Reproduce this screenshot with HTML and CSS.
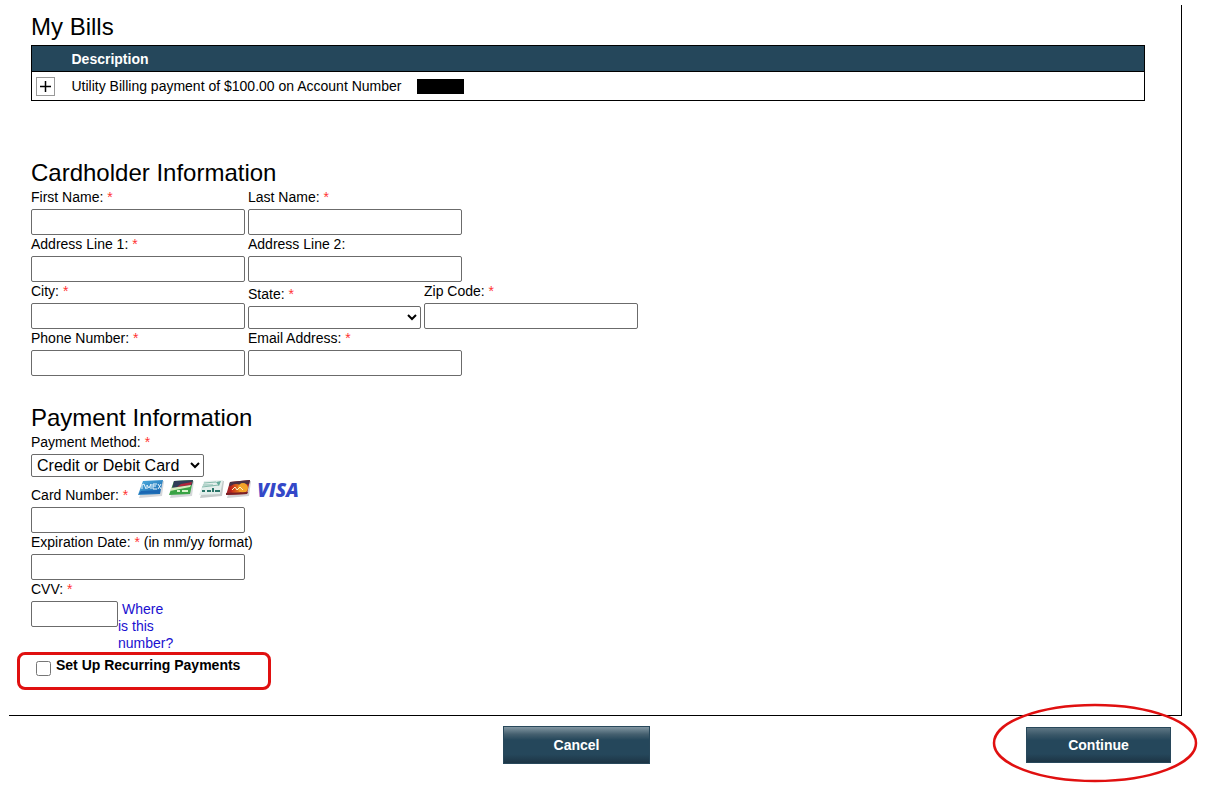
FILE: index.html
```html
<!DOCTYPE html>
<html lang="en">
<head>
<meta charset="utf-8">
<title>My Bills</title>
<link rel="stylesheet" href="styles.css">
</head>
<body>
<form class="page">
  <main class="panel">
    <section class="bills">
      <h2 class="title">My Bills</h2>
      <table class="bill-table">
        <thead>
          <tr><th class="toggle-cell"></th><th>Description</th></tr>
        </thead>
        <tbody>
          <tr>
            <td class="toggle-cell">
              <button class="toggle" type="button" aria-label="Expand">
                <svg width="17" height="17" viewBox="0 0 17 17"><path d="M3 8.500H14M8.500 3V14" stroke="#000" stroke-width="1.500"/></svg>
              </button>
            </td>
            <td><div class="bill-text">Utility Billing payment of $100.00 on Account Number <span class="redacted"></span></div></td>
          </tr>
        </tbody>
      </table>
    </section>

    <section class="cardholder">
      <h2 class="title">Cardholder Information</h2>
      <div class="row">
        <div class="field"><label for="first">First Name: <span class="req">*</span></label><input id="first" type="text"></div>
        <div class="field"><label for="last">Last Name: <span class="req">*</span></label><input id="last" type="text"></div>
      </div>
      <div class="row">
        <div class="field"><label for="addr1">Address Line 1: <span class="req">*</span></label><input id="addr1" type="text"></div>
        <div class="field"><label for="addr2">Address Line 2:</label><input id="addr2" type="text"></div>
      </div>
      <div class="row">
        <div class="field"><label for="city">City: <span class="req">*</span></label><input id="city" type="text"></div>
        <div class="field"><label for="state">State: <span class="req">*</span></label><select id="state"><option></option></select></div>
        <div class="field"><label for="zip">Zip Code: <span class="req">*</span></label><input id="zip" type="text"></div>
      </div>
      <div class="row">
        <div class="field"><label for="phone">Phone Number: <span class="req">*</span></label><input id="phone" type="text"></div>
        <div class="field"><label for="email">Email Address: <span class="req">*</span></label><input id="email" type="text"></div>
      </div>
    </section>

    <section class="payment">
      <h2 class="title">Payment Information</h2>
      <div class="field"><label for="method">Payment Method: <span class="req">*</span></label><select id="method"><option>Credit or Debit Card</option></select></div>
      <div class="field">
        <div class="card-line">
          <label for="card">Card Number: <span class="req">*</span></label>
          <div class="cards">
            <svg width="114" height="22" viewBox="0 0 114 22" role="img" aria-label="Accepted cards">
              <defs>
                <linearGradient id="amex" x1="0" y1="0" x2="1" y2="1"><stop offset="0" stop-color="#4fb0e0"/><stop offset="1" stop-color="#1764ad"/></linearGradient>
                <linearGradient id="mc" x1="0" y1="0" x2="1" y2="0"><stop offset="0" stop-color="#c01818"/><stop offset="1" stop-color="#f0a020"/></linearGradient>
              </defs>
              <g>
                <path d="M6 3L26 2L24 17L1 19Z" fill="#d5d7da"/>
                <path d="M5 2L25 1L22 15L0 16Z" fill="url(#amex)"/>
                <path d="M3 12L22 11L22 14L1 15Z" fill="#1b67b3"/>
                <path d="M4 10V6L6 5L8 10M9 10V6L11 9L13 5V10M19 5H15V10H19M15 7H18M20 5L23 10M23 5L20 10" fill="none" stroke="#e7f5fc"/>
              </g>
              <g>
                <path d="M37 3L56 2L54 17L32 19Z" fill="#d5d7da"/>
                <path d="M36 2L55 1L52 15L31 16Z" fill="#39a345"/>
                <path d="M36 2L55 1L54 6L34 10Z" fill="#303d57"/>
                <path d="M43 5L54 3L53 6L39 8Z" fill="#b1263b"/>
                <path d="M33 9L53 6L52 8L32 12Z" fill="#d7edbd"/>
                <path d="M39 12H42M44 12H50" stroke="#d8f4cb" stroke-width="2"/>
              </g>
              <g>
                <path d="M67 3L86 2L84 17L62 19Z" fill="#c4caca"/>
                <path d="M66 2L85 1L82 15L61 16Z" fill="#e4efec"/>
                <path d="M66 4L78 3M65 6H75M64 8L81 6" stroke="#86bbad"/>
                <path d="M64 12H67M69 12H73M75 9V13M77 12H82" stroke="#2b7569" stroke-width="2"/>
                <path d="M78 3L83 2L81 7Z" fill="#64aa9a"/>
              </g>
              <g>
                <path d="M93 3L113 2L111 17L89 19Z" fill="#d0d1d3"/>
                <path d="M92 3L112 1L109 15L88 16Z" fill="#a92527"/>
                <path d="M92 3L112 1L111 5L91 7Z" fill="#4c3044"/>
                <ellipse cx="98" cy="10" rx="6" ry="5" fill="url(#mc)"/>
                <ellipse cx="105" cy="9" rx="5" ry="5" fill="#f2a32a"/>
                <path d="M94 11L97 8L99 11L102 8L105 11" fill="none" stroke="#fff0c8"/>
                <path d="M88 14L110 13L109 15L88 16Z" fill="#792026"/>
              </g>
            </svg>
            <span class="visa">VISA</span>
          </div>
        </div>
        <input id="card" type="text">
      </div>
      <div class="field"><label for="exp">Expiration Date: <span class="req">*</span> (in mm/yy format)</label><input id="exp" type="text"></div>
      <div class="field">
        <label for="cvv">CVV: <span class="req">*</span></label>
        <div class="cvv-line"><input class="cvv" id="cvv" type="text"><a class="help" href="#">Where is this number?</a></div>
      </div>
      <div class="recurring"><input type="checkbox" id="recurring"><label for="recurring">Set Up Recurring Payments</label></div>
    </section>
  </main>

  <footer class="actions">
    <button class="btn cancel" type="button">Cancel</button>
    <div class="highlight">
      <button class="btn continue" type="submit">Continue</button>
      <svg class="ring" viewBox="0 0 206 80" aria-hidden="true"><ellipse cx="103" cy="40" rx="101" ry="38" fill="none" stroke="#e01010" stroke-width="2.500"/></svg>
    </div>
  </footer>
</form>
</body>
</html>
```
FILE: styles.css
```css
* {
  box-sizing: border-box;
}

body {
  margin: 0;
  background: #fff;
  color: #000;
  font: 14px/18px "Liberation Sans", Arial, sans-serif;
}

.page {
  padding: 5px 26px 36px 9px;
}

.panel {
  padding: 7px 36px 25px 22px;
  border-right: 1px solid #000;
  border-bottom: 1px solid #000;
}

.title {
  margin: 0;
  font-size: 24px;
  line-height: 30px;
  font-weight: 400;
}

.bills .title {
  margin-bottom: 3px;
}

.bill-table {
  width: 100%;
  border: 1px solid #000;
  border-collapse: collapse;
}

.bill-table th,
.bill-table td {
  padding: 0;
  text-align: left;
}

.bill-table th {
  height: 26px;
  background: #25475b;
  border-bottom: 1px solid #000;
  color: #fff;
}

.bill-table td {
  height: 29px;
}

.bill-table .toggle-cell {
  width: 40px;
  padding-left: 4px;
}

.toggle {
  display: block;
  width: 19px;
  height: 19px;
  padding: 0;
  border: 1px solid #999;
  background: #fff;
}

.toggle svg {
  display: block;
}

.bill-text {
  display: flex;
  align-items: center;
  gap: 16px;
}

.redacted {
  width: 47px;
  height: 15px;
  background: #000;
}

.cardholder {
  margin-top: 57px;
}

.payment {
  margin-top: 27px;
}

.row {
  display: flex;
  align-items: flex-end;
  gap: 3px;
}

.field {
  display: flex;
  flex-direction: column;
  align-items: flex-start;
  gap: 3px;
}

.req {
  color: #f33;
}

input[type="text"] {
  width: 214px;
  height: 26px;
  margin: 0;
  border: 1px solid #6b6b6b;
  border-radius: 2px;
}

select {
  width: 173px;
  height: 23px;
  padding: 0 1px;
  border: 1px solid #6b6b6b;
  border-radius: 2px;
  background: #fff;
  color: #000;
  font: 16px "Liberation Sans", Arial, sans-serif;
}

.card-line {
  display: flex;
  align-items: flex-end;
  gap: 10px;
  padding-top: 2px;
}

.cards {
  display: flex;
  gap: 5px;
  margin-bottom: 3px;
}

.visa {
  color: #3448c8;
  font: italic 800 19px/22px "Open Sans", sans-serif;
}

.cvv-line {
  display: flex;
  align-items: flex-start;
}

input.cvv {
  width: 87px;
}

.help {
  width: 57px;
  color: #1a10d0;
  line-height: 17px;
  text-decoration: none;
  text-indent: 4px;
}

.recurring {
  display: flex;
  align-items: flex-start;
  gap: 5px;
  width: 254px;
  height: 38px;
  margin-left: -14px;
  padding: 1px 16px;
  border: 3px solid #e01010;
  border-radius: 8px;
  font-weight: 700;
}

.recurring input {
  width: 15px;
  height: 15px;
  margin: 5px 0 0;
}

.actions {
  display: grid;
  grid-template-columns: 1fr auto 1fr;
  align-items: center;
  padding: 10px 11px 0 0;
}

.btn {
  display: block;
  border: 1px solid #28485b;
  background: linear-gradient(#8297a3 0, #45606f 20%, #25475b 36%, #25475b 76%, #1d3545 100%);
  color: #fff;
  font: 700 14px "Liberation Sans", Arial, sans-serif;
}

.cancel {
  grid-column: 2;
  width: 147px;
  height: 38px;
  margin-right: 27px;
}

.highlight {
  position: relative;
  justify-self: end;
}

.continue {
  width: 145px;
  height: 36px;
  background: linear-gradient(#5d7684 0, #3a5768 20%, #25475b 36%, #25475b 76%, #1d3545 100%);
}

.ring {
  position: absolute;
  top: -24px;
  left: -34px;
  width: 206px;
  height: 80px;
  pointer-events: none;
}
```
